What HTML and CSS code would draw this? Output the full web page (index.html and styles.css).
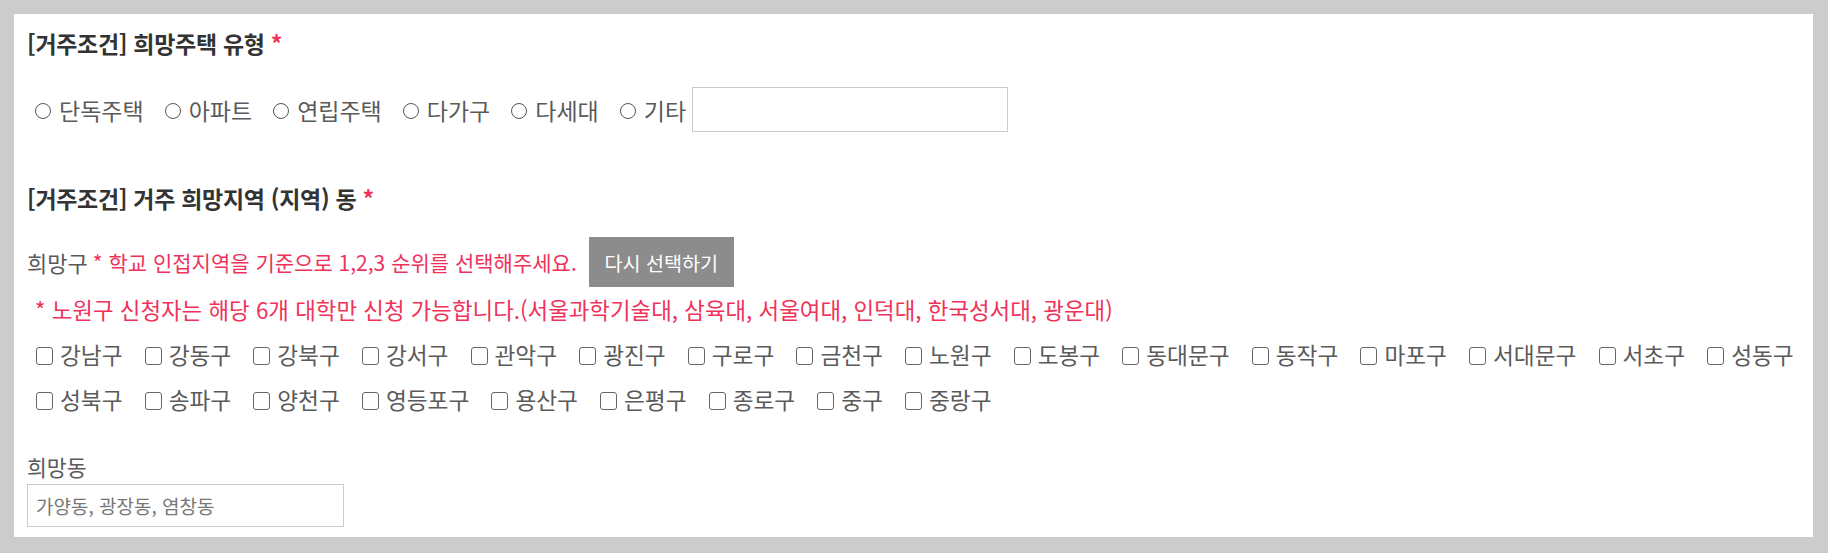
FILE: index.html
```html
<!DOCTYPE html>
<html lang="ko">
<head>
<meta charset="utf-8">
<title>거주조건</title>
<link rel="stylesheet" href="styles.css">
</head>
<body>
<div class="panel">
  <h2 class="title">[거주조건] 희망주택 유형 <span class="req">*</span></h2>
  <div class="radio-row">
    <label class="opt"><span class="radio"></span>단독주택</label>
    <label class="opt"><span class="radio"></span>아파트</label>
    <label class="opt"><span class="radio"></span>연립주택</label>
    <label class="opt"><span class="radio"></span>다가구</label>
    <label class="opt"><span class="radio"></span>다세대</label>
    <label class="opt etc"><span class="radio"></span>기타</label>
    <div class="text-box etc-box"></div>
  </div>

  <h2 class="title title2">[거주조건] 거주 희망지역 (지역) 동 <span class="req">*</span></h2>
  <div class="gu-row">
    <span class="gu-label">희망구</span>
    <span class="red">* 학교 인접지역을 기준으로 1,2,3 순위를 선택해주세요.</span>
    <span class="btn">다시 선택하기</span>
  </div>
  <p class="notice">* 노원구 신청자는 해당 6개 대학만 신청 가능합니다.(서울과학기술대, 삼육대, 서울여대, 인덕대, 한국성서대, 광운대)</p>
  <div class="check-list first">
    <label class="chk"><span class="box"></span>강남구</label>
    <label class="chk"><span class="box"></span>강동구</label>
    <label class="chk"><span class="box"></span>강북구</label>
    <label class="chk"><span class="box"></span>강서구</label>
    <label class="chk"><span class="box"></span>관악구</label>
    <label class="chk"><span class="box"></span>광진구</label>
    <label class="chk"><span class="box"></span>구로구</label>
    <label class="chk"><span class="box"></span>금천구</label>
    <label class="chk"><span class="box"></span>노원구</label>
    <label class="chk"><span class="box"></span>도봉구</label>
    <label class="chk"><span class="box"></span>동대문구</label>
    <label class="chk"><span class="box"></span>동작구</label>
    <label class="chk"><span class="box"></span>마포구</label>
    <label class="chk"><span class="box"></span>서대문구</label>
    <label class="chk"><span class="box"></span>서초구</label>
    <label class="chk"><span class="box"></span>성동구</label>
  </div>
  <div class="check-list">
    <label class="chk"><span class="box"></span>성북구</label>
    <label class="chk"><span class="box"></span>송파구</label>
    <label class="chk"><span class="box"></span>양천구</label>
    <label class="chk"><span class="box"></span>영등포구</label>
    <label class="chk"><span class="box"></span>용산구</label>
    <label class="chk"><span class="box"></span>은평구</label>
    <label class="chk"><span class="box"></span>종로구</label>
    <label class="chk"><span class="box"></span>중구</label>
    <label class="chk"><span class="box"></span>중랑구</label>
  </div>

  <div class="dong-label">희망동</div>
  <div class="text-box dong-box"><span class="placeholder">가양동, 광장동, 염창동</span></div>
</div>
</body>
</html>
```

FILE: styles.css
```css
* { box-sizing: border-box; }

html, body {
  margin: 0;
  padding: 0;
}

body {
  background: #cccccc;
  padding: 14px 15px 16px 14px;
  font-family: "Noto Sans CJK KR", "Noto Sans", sans-serif;
  color: #5a5a5a;
}

.panel {
  background: #ffffff;
  padding: 14px 13px 11px 13px;
  height: 523px;
}

.title {
  margin: 0;
  font-size: 23px;
  font-weight: 700;
  line-height: 30px;
  color: #333333;
  letter-spacing: -0.3px;
}

.req {
  color: #f0325a;
}

.title2 {
  margin-top: 51px;
}

.radio-row {
  display: flex;
  align-items: center;
  height: 45px;
  margin-top: 29px;
  padding-left: 8px;
  font-size: 23px;
}

.opt {
  display: flex;
  align-items: center;
  margin-right: 21px;
  line-height: 30px;
  white-space: nowrap;
}

.opt.etc {
  margin-right: 6px;
}

.radio {
  width: 16px;
  height: 16px;
  border: 1.4px solid #555555;
  border-radius: 50%;
  margin-right: 8px;
  margin-top: 2px;
}

.text-box {
  border: 1px solid #cccccc;
  background: #ffffff;
}

.etc-box {
  width: 316px;
  height: 45px;
}

.gu-row {
  display: flex;
  align-items: center;
  height: 50px;
  margin-top: 24px;
  white-space: nowrap;
}

.gu-label {
  font-size: 22px;
  margin-right: 5px;
}

.red {
  color: #f0325a;
}

.gu-row .red {
  font-size: 21px;
}

.btn {
  margin-left: 12px;
  background: #8c8c8c;
  color: #ffffff;
  height: 50px;
  width: 145px;
  display: flex;
  align-items: center;
  justify-content: center;
  font-size: 19.6px;
}

.notice {
  margin: 7px 0 0 0;
  padding-left: 8px;
  line-height: 30px;
  font-size: 22.4px;
  color: #f0325a;
  white-space: nowrap;
}

.check-list {
  display: flex;
  align-items: center;
  height: 45px;
  padding-left: 9px;
  font-size: 22.7px;
}

.check-list.first {
  margin-top: 8px;
}

.chk {
  display: flex;
  align-items: center;
  flex-shrink: 0;
  margin-right: 22px;
  line-height: 30px;
  white-space: nowrap;
}

.chk:last-child {
  margin-right: 0;
}

.box {
  flex-shrink: 0;
  width: 17px;
  height: 18px;
  border: 1.5px solid #666666;
  border-radius: 3px;
  margin-right: 7px;
  margin-top: 2px;
}

.dong-label {
  margin-top: 30px;
  line-height: 30px;
  font-size: 21.6px;
}

.dong-box {
  margin-top: 2px;
  width: 317px;
  height: 43px;
  display: flex;
  align-items: center;
  padding-left: 8px;
}

.placeholder {
  font-size: 19px;
  color: #777777;
}
```
